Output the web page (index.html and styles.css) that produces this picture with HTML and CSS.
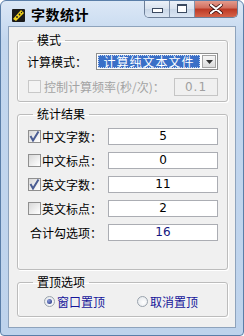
FILE: index.html
```html
<!DOCTYPE html>
<html lang="zh-CN">
<head>
    <meta charset="UTF-8">
    <meta name="viewport" content="width=device-width, initial-scale=1.0">
    <title>字数统计</title>
    <link rel="stylesheet" href="styles.css">
</head>
<body>
    <div class="window">
        <div class="titlebar">
            <svg class="app-icon" width="13" height="14" viewBox="0 0 13 14">
                <rect x="0" y="1" width="13" height="13" rx="1" fill="#1a1a1a"/>
                <path d="M1 11 L9 2 L12 5 L4 13 Z" fill="#f2d21c"/>
                <circle cx="5" cy="9" r="0.9" fill="#1a1a1a"/>
                <circle cx="7.5" cy="6.5" r="0.9" fill="#1a1a1a"/>
                <circle cx="9.5" cy="4.5" r="0.7" fill="#1a1a1a"/>
            </svg>
            <span class="title">字数统计</span>
            <div class="caption-buttons">
                <span class="cap-btn cap-min"><i></i></span>
                <span class="cap-btn cap-max"><i></i></span>
                <span class="cap-btn cap-close">
                    <svg width="14" height="10" viewBox="0 0 14 10">
                        <path d="M2 1 L12 9 M12 1 L2 9" stroke="#3a1010" stroke-width="3.6" stroke-linecap="round"/>
                        <path d="M2 1 L12 9 M12 1 L2 9" stroke="#fff" stroke-width="2.2" stroke-linecap="round"/>
                    </svg>
                </span>
            </div>
        </div>

        <div class="client">
            <fieldset class="group group-mode">
                <legend>模式</legend>
                <div class="row">
                    <span class="label label-wide">计算模式：</span>
                    <div class="combo">
                        <span class="combo-text">计算纯文本文件</span>
                        <span class="combo-btn">
                            <svg width="7" height="4" viewBox="0 0 7 4"><path d="M0 0 H7 L3.5 4 Z" fill="#333"/></svg>
                        </span>
                    </div>
                </div>
                <div class="row row-disabled">
                    <span class="check check-disabled"></span>
                    <span class="label">控制计算频率(秒/次)：</span>
                    <span class="field field-small field-disabled">0.1</span>
                </div>
            </fieldset>

            <fieldset class="group group-result">
                <legend>统计结果</legend>
                <div class="row">
                    <span class="check checked">
                        <svg width="11" height="11" viewBox="0 0 11 11"><path d="M1.5 5 L4 9.5 L9.5 0.5" fill="none" stroke="#4b5d93" stroke-width="2"/></svg>
                    </span>
                    <span class="label">中文字数：</span>
                    <span class="field">5</span>
                </div>
                <div class="row">
                    <span class="check"></span>
                    <span class="label">中文标点：</span>
                    <span class="field">0</span>
                </div>
                <div class="row">
                    <span class="check checked">
                        <svg width="11" height="11" viewBox="0 0 11 11"><path d="M1.5 5 L4 9.5 L9.5 0.5" fill="none" stroke="#4b5d93" stroke-width="2"/></svg>
                    </span>
                    <span class="label">英文字数：</span>
                    <span class="field">11</span>
                </div>
                <div class="row">
                    <span class="check"></span>
                    <span class="label">英文标点：</span>
                    <span class="field">2</span>
                </div>
                <div class="row">
                    <span class="label label-total">合计勾选项：</span>
                    <span class="field field-total">16</span>
                </div>
            </fieldset>

            <fieldset class="group group-top">
                <legend>置顶选项</legend>
                <div class="row radios">
                    <span class="radio-item">
                        <span class="radio radio-on"></span>
                        <span class="radio-label">窗口置顶</span>
                    </span>
                    <span class="radio-item">
                        <span class="radio"></span>
                        <span class="radio-label">取消置顶</span>
                    </span>
                </div>
            </fieldset>
        </div>
    </div>
</body>
</html>
```

FILE: styles.css
```css
body {
    margin: 0;
    background-color: #fff;
    font-family: "Noto Sans CJK SC", "DejaVu Sans", sans-serif;
    font-size: 12px;
    color: #000;
}
.window {
    width: 244px;
    height: 336px;
    box-sizing: border-box;
    border: 1px solid #5a7ea8;
    border-radius: 6px 6px 4px 4px;
    background: linear-gradient(#dce8f6, #c2d6ee 40px, #bed3ec);
    padding: 0 7px 6px 7px;
    overflow: hidden;
}
.titlebar {
    height: 25px;
    display: flex;
    align-items: center;
    position: relative;
}
.app-icon {
    margin-left: 4px;
    margin-top: 2px;
}
.title {
    margin-left: 6px;
    margin-top: 1px;
    font-size: 14px;
    font-weight: bold;
    color: #000;
    letter-spacing: 0.5px;
}
.caption-buttons {
    position: absolute;
    top: -1px;
    right: -2px;
    display: flex;
    height: 17px;
    border: 1px solid #6d7f98;
    border-top: none;
    border-radius: 0 0 5px 5px;
    overflow: hidden;
}
.cap-btn {
    display: flex;
    align-items: center;
    justify-content: center;
    height: 17px;
    background: linear-gradient(#eef3fa, #d9e3ef 50%, #c8d6e7 51%, #dbe6f3);
}
.cap-min {
    width: 24px;
    border-right: 1px solid #8293ab;
}
.cap-max {
    width: 24px;
    border-right: 1px solid #8293ab;
}
.cap-min i {
    display: block;
    width: 9px;
    height: 3px;
    margin-top: 4px;
    border: 1px solid #3b4a60;
    background-color: #fff;
}
.cap-max i {
    display: block;
    width: 8px;
    height: 6px;
    border: 1px solid #3b4a60;
    border-top-width: 2px;
    background-color: #fff;
    box-shadow: inset 0 0 0 1px #fff;
}
.cap-close {
    width: 42px;
    background: linear-gradient(#e6a294, #d27060 45%, #bd3a25 55%, #d6644a);
}
.client {
    height: 302px;
    box-sizing: border-box;
    border: 1px solid #8ea3bc;
    background-color: #f0f0f0;
    padding: 5px 7px 0 8px;
}
.group {
    margin: 0;
    padding: 0 9px 0 9px;
    border: 1px solid #bcbcbc;
    border-radius: 3px;
    box-shadow: inset 1px 1px 0 #fff, 1px 1px 0 #fff;
    display: flex;
    flex-direction: column;
    min-width: 0;
}
.group legend {
    margin-left: 6px;
    padding: 0 4px;
    line-height: 16px;
    color: #000;
}
.group-mode {
    padding-top: 5px;
    padding-bottom: 6px;
    gap: 8px;
}
.group-result {
    margin-top: 4px;
    padding-top: 6px;
    padding-bottom: 28px;
    gap: 7px;
}
.group-top {
    margin-top: 4px;
    padding-top: 4px;
    padding-bottom: 8px;
}
.row {
    display: flex;
    align-items: center;
    height: 17px;
}
.label {
    white-space: nowrap;
}
.label-wide {
    width: 70px;
}
.row-disabled .label {
    color: #a3a3a3;
    margin-left: 2px;
}
.combo {
    display: flex;
    margin-left: auto;
    width: 124px;
    height: 17px;
    box-sizing: border-box;
    border: 1px solid #8e8f8f;
    background-color: #fff;
    padding: 1px;
}
.combo-text {
    flex: 1;
    background-color: #3a6fc7;
    color: #fff;
    text-align: center;
    line-height: 13px;
    outline: 1px dotted #c6d5ee;
    outline-offset: -1px;
    letter-spacing: 1px;
}
.combo-btn {
    width: 14px;
    margin-left: 2px;
    display: flex;
    align-items: center;
    justify-content: center;
    border: 1px solid #a3a3a3;
    box-sizing: border-box;
    background: linear-gradient(#f6f6f6, #dcdcdc);
}
.check {
    width: 13px;
    height: 13px;
    box-sizing: border-box;
    border: 1px solid #8f8f8f;
    background: linear-gradient(135deg, #d8d8d8, #f4f4f4 70%, #fff);
    display: flex;
    align-items: center;
    justify-content: center;
    margin-left: 1px;
    margin-right: 1px;
    flex: none;
}
.check-disabled {
    border-color: #c8c8c8;
    background: #f4f4f4;
}
.field {
    margin-left: auto;
    width: 110px;
    height: 17px;
    box-sizing: border-box;
    border: 1px solid #abadb3;
    background-color: #fff;
    text-align: center;
    line-height: 15px;
    font-family: "DejaVu Sans", sans-serif;
    font-size: 12px;
}
.field-small {
    width: 44px;
    height: 18px;
    line-height: 16px;
}
.field-disabled {
    background-color: #f0f0f0;
    border-color: #c5c5c5;
    color: #a0a0a0;
    letter-spacing: 1px;
}
.label-total {
    margin-left: 3px;
}
.field-total {
    color: #141480;
}
.radios {
    height: 14px;
    gap: 0;
}
.radio-item {
    display: flex;
    align-items: center;
}
.radio-item:first-child {
    margin-left: 17px;
    width: 93px;
}
.radio {
    width: 11px;
    height: 11px;
    box-sizing: border-box;
    border-radius: 50%;
    border: 1px solid #9aa3ad;
    background: radial-gradient(circle at 60% 60%, #fff, #dfe3e8);
    margin-right: 2px;
    display: flex;
    align-items: center;
    justify-content: center;
}
.radio-on::after {
    content: "";
    width: 5px;
    height: 5px;
    border-radius: 50%;
    background: radial-gradient(circle at 35% 35%, #8a9ad8, #1b2a7a);
}
.radio-label {
    color: #16169a;
    font-size: 12px;
}
```
